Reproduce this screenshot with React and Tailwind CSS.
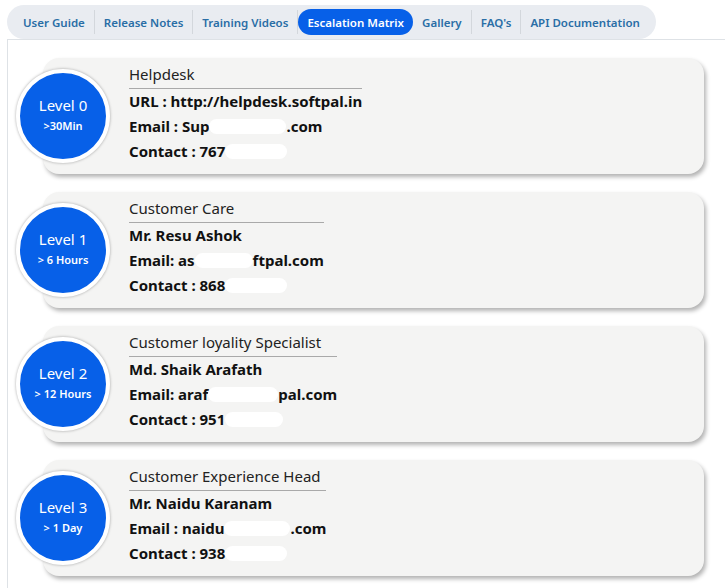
import { useState } from 'react';

const TABS = ['User Guide', 'Release Notes', 'Training Videos', 'Escalation Matrix', 'Gallery', "FAQ's", 'API Documentation'];

// pieces: strings are text, numbers are white redaction blobs (px wide)
const LEVELS = [
  {
    level: 'Level 0',
    time: '>30Min',
    title: 'Helpdesk',
    lines: [
      ['URL : http://helpdesk.softpal.in'],
      ['Email : Sup', 77, '.com'],
      ['Contact : 767', 62],
    ],
  },
  {
    level: 'Level 1',
    time: '> 6 Hours',
    title: 'Customer Care',
    lines: [
      ['Mr. Resu Ashok'],
      ['Email: as', 58, 'ftpal.com'],
      ['Contact : 868', 62],
    ],
  },
  {
    level: 'Level 2',
    time: '> 12 Hours',
    title: 'Customer loyality Specialist',
    lines: [
      ['Md. Shaik Arafath'],
      ['Email: araf', 70, 'pal.com'],
      ['Contact : 951', 58],
    ],
  },
  {
    level: 'Level 3',
    time: '> 1 Day',
    title: 'Customer Experience Head',
    lines: [
      ['Mr. Naidu Karanam'],
      ['Email : naidu', 66, '.com'],
      ['Contact : 938', 62],
    ],
  },
];

function Line({ parts }) {
  return (
    <p className="text-[15px] font-bold leading-[25px] text-[#111] whitespace-nowrap">
      {parts.map((p, i) =>
        typeof p === 'number' ? (
          <span key={i} className="inline-block align-middle h-[15px] -mt-[2px] bg-white rounded-full" style={{ width: p }} />
        ) : (
          <span key={i}>{p}</span>
        )
      )}
    </p>
  );
}

function LevelCard({ item }) {
  return (
    <div className="flex items-center">
      {/* Level badge */}
      <div className="relative z-10 shrink-0 w-[94px] h-[94px] rounded-full bg-[#0760e8] border-4 border-white shadow-[0_0_3px_rgba(0,0,0,0.35)] flex flex-col items-center justify-center text-white">
        <p className="text-[15px] leading-[20px] -mt-[4px]">{item.level}</p>
        <p className="text-[11px] font-semibold leading-[16px] mt-[3px]">{item.time}</p>
      </div>

      <div className="-ml-[67px] w-[661px] h-[116px] bg-[#f4f4f3] rounded-[16px] shadow-[2px_3px_4px_rgba(0,0,0,0.3)] pl-[86px] pt-[4px]">
        <div className="inline-block">
          <p className="text-[15px] leading-[24px] pb-[2px] text-[#222] border-b border-[#a9a9a9]">{item.title}</p>
          {item.lines.map((parts, i) => (
            <Line key={i} parts={parts} />
          ))}
        </div>
      </div>
    </div>
  );
}

export default function App() {
  const [tab, setTab] = useState(3);

  return (
    <div className="min-h-screen bg-white pt-[5px] pl-[7px]" style={{ fontFamily: '"Noto Sans", "Open Sans", sans-serif' }}>
      {/* Tabs */}
      <div className="inline-flex items-center h-[34px] px-[7px] bg-[#e9ecf1] rounded-full">
        {TABS.map((label, i) => (
          <div key={i} className="flex items-center">
            {i > 0 && i !== tab + 1 && <span className="w-px h-[24px] bg-[#d3d7dc]" />}
            <button
              onClick={() => setTab(i)}
              className={`h-[26px] px-[9px] rounded-full text-[11.5px] font-semibold whitespace-nowrap pt-[1px] ${
                tab === i ? 'bg-[#0760e8] text-white' : 'text-[#2a6ea6]'
              }`}
            >
              {label}
            </button>
          </div>
        ))}
      </div>

      {/* Content */}
      <div className="border-l border-t border-[#dee2e6] pt-[18px] pl-[8px] pb-4 flex flex-col gap-[18px]">
        {LEVELS.map((item, i) => (
          <LevelCard key={i} item={item} />
        ))}
      </div>
    </div>
  );
}
